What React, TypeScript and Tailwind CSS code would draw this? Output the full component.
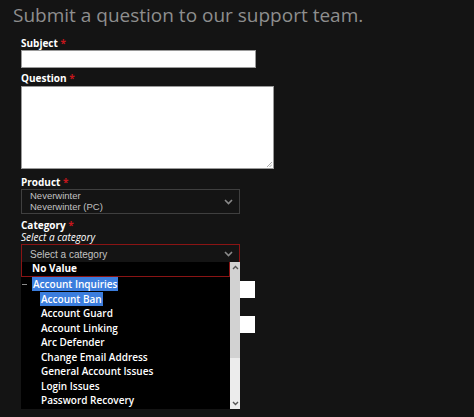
const labelFont = { fontFamily: '"Open Sans", "Noto Sans", sans-serif' };

function Chevron({ className }: { className?: string }) {
  return (
    <svg width="9" height="6" viewBox="0 0 9 6" className={className}>
      <polyline points="1,1 4.5,4.5 8,1" fill="none" stroke="currentColor" strokeWidth="1.6" />
    </svg>
  );
}

function Label({ children }: { children: React.ReactNode }) {
  return (
    <div className="text-[10px] font-bold leading-[12px] text-white">
      {children} <span className="text-[#c4161c]">*</span>
    </div>
  );
}

const options = [
  "Account Guard",
  "Account Linking",
  "Arc Defender",
  "Change Email Address",
  "General Account Issues",
  "Login Issues",
  "Password Recovery",
];

export default function App() {
  return (
    <div
      className="relative h-[417px] w-[474px] overflow-hidden bg-[#141414]"
      style={labelFont}
    >
      <h1 className="pl-[13px] pt-[2px] text-[19px] leading-[26px] text-[#8e8e8e]">
        Submit a question to our support team.
      </h1>

      <form className="mt-[9px] pl-[21px]">
        <Label>Subject</Label>
        <div className="mt-[1px] h-[18px] w-[235px] border border-[#9a9a9a] bg-white" />

        <div className="mt-[4px]">
          <Label>Question</Label>
        </div>
        <div className="relative mt-[2px] h-[83px] w-[253px] border border-[#9a9a9a] bg-white">
          <svg width="6" height="6" viewBox="0 0 6 6" className="absolute bottom-[1px] right-[1px] text-[#999]">
            <path d="M1 6 L6 1 M3.5 6 L6 3.5" stroke="currentColor" strokeWidth="0.8" />
          </svg>
        </div>

        <div className="mt-[7px]">
          <Label>Product</Label>
        </div>
        <div
          className="mt-[1px] flex h-[25px] w-[219px] items-center justify-between border border-[#3f3f3f] pl-[8px] pr-[6px] text-[9.5px] leading-[10.5px] text-[#c2c2c2]"
          style={{ fontFamily: '"Liberation Sans", Arial, sans-serif' }}
        >
          <div>
            <div>Neverwinter</div>
            <div>Neverwinter (PC)</div>
          </div>
          <Chevron className="text-[#8a8a8a]" />
        </div>

        <div className="mt-[5px]">
          <Label>Category</Label>
        </div>
        <div className="text-[10px] italic leading-[12px] text-white">Select a category</div>
        <div
          className="mt-[1px] flex h-[20px] w-[219px] items-center justify-between border border-[#8a1414] pl-[8px] pr-[6px] text-[10px] text-[#c2c2c2]"
          style={{ fontFamily: '"Liberation Sans", Arial, sans-serif' }}
        >
          <span>Select a category</span>
          <Chevron className="text-[#8a8a8a]" />
        </div>

        {/* fields hidden behind the open list */}
        <div className="mt-[17px] h-[17px] w-[234px] bg-white" />
        <div className="mt-[18px] h-[17px] w-[234px] bg-white" />
      </form>

      {/* open category list */}
      <div className="absolute left-[21px] top-[262px] h-[147px] w-[219px] bg-black">
        <div className="h-[15px] w-[209px] border-x border-b border-[#8a1414] pl-[10px] text-[10px] font-bold leading-[13px] text-white">
          No Value
        </div>
        <div className="relative text-[10px] font-semibold leading-[14.5px] text-white">
          <div className="absolute left-[1px] top-[7px] h-[1px] w-[5px] bg-[#8a8a8a]" />
          <div className="pl-[11px]">
            <span className="bg-[#3b7ddd] px-[1px]">Account Inquiries</span>
          </div>
          <div className="pl-[19px]">
            <span className="bg-[#3b7ddd] px-[1px]">Account Ban</span>
          </div>
          {options.map((o) => (
            <div key={o} className="pl-[20px]">
              {o}
            </div>
          ))}
        </div>

        {/* scrollbar */}
        <div className="absolute right-0 top-0 flex h-full w-[10px] flex-col bg-[#ececec]">
          <div className="relative h-[96px] bg-[#d2d2d2]">
            <svg width="7" height="5" viewBox="0 0 7 5" className="absolute left-[1.5px] top-[3px] text-[#555]">
              <polyline points="1,4 3.5,1.5 6,4" fill="none" stroke="currentColor" strokeWidth="1.4" />
            </svg>
          </div>
          <div className="relative flex-1">
            <svg width="7" height="5" viewBox="0 0 7 5" className="absolute bottom-[3px] left-[1.5px] text-[#555]">
              <polyline points="1,1 3.5,3.5 6,1" fill="none" stroke="currentColor" strokeWidth="1.4" />
            </svg>
          </div>
        </div>
      </div>
    </div>
  );
}
